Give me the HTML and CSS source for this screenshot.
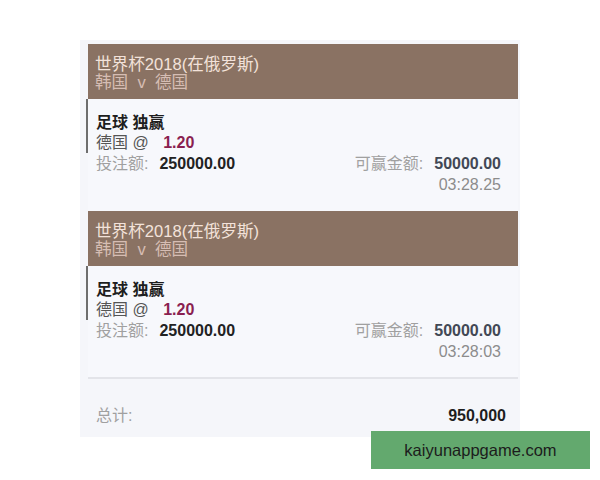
FILE: index.html
```html
<!DOCTYPE html>
<html lang="zh">
<head>
<meta charset="utf-8">
<link rel="stylesheet" href="styles.css">
</head>
<body>
<div class="panel">
  <div class="card">
    <div class="head">
      <div class="title">世界杯2018(在俄罗斯)</div>
      <div class="match">韩国 &nbsp;v &nbsp;德国</div>
    </div>
    <div class="body">
      <div class="sel">
        <div class="market">足球 独赢</div>
        <div class="pick">德国 @ <span class="odds">1.20</span></div>
      </div>
      <div class="row">
        <div><span class="label">投注额:</span><span class="val">250000.00</span></div>
        <div><span class="label">可赢金额:</span><span class="win">50000.00</span></div>
      </div>
      <div class="time">03:28.25</div>
    </div>
  </div>
  <div class="card last">
    <div class="head">
      <div class="title">世界杯2018(在俄罗斯)</div>
      <div class="match">韩国 &nbsp;v &nbsp;德国</div>
    </div>
    <div class="body">
      <div class="sel">
        <div class="market">足球 独赢</div>
        <div class="pick">德国 @ <span class="odds">1.20</span></div>
      </div>
      <div class="row">
        <div><span class="label">投注额:</span><span class="val">250000.00</span></div>
        <div><span class="label">可赢金额:</span><span class="win">50000.00</span></div>
      </div>
      <div class="time">03:28:03</div>
    </div>
  </div>
  <div class="total">
    <span class="label">总计:</span>
    <span class="sum">950,000</span>
  </div>
</div>
<div class="mark">kaiyunappgame.com</div>
</body>
</html>
```
FILE: styles.css
```css
html, body {
  margin: 0;
  padding: 0;
  background: #ffffff;
}
body {
  font-family: "Liberation Sans", "Noto Sans CJK SC", sans-serif;
  font-size: 16px;
  color: #222222;
  width: 600px;
  height: 480px;
  position: relative;
  overflow: hidden;
}
.panel {
  margin: 40px 0 0 80px;
  width: 430px;
  height: 393px;
  padding: 4px 2px 0 8px;
  background: #f5f6fa;
}
.head {
  height: 55px;
  box-sizing: border-box;
  padding: 12px 0 0 7px;
  background: #8a7263;
  font-size: 16.6px;
  line-height: 18px;
}
.title {
  color: #f3e2da;
}
.match {
  color: #d6bdb3;
}
.body {
  padding: 0 17px 16px 8px;
  background: #f7f8fc;
}
.last .body {
  padding-bottom: 15px;
  border-bottom: 2px solid #e3e4e9;
}
.sel {
  margin-left: -10px;
  padding: 14px 0 0 8px;
  border-left: 2px solid #6e6e6e;
  line-height: 20px;
}
.market {
  font-weight: bold;
  color: #1e1e1e;
}
.pick {
  color: #555555;
}
.odds {
  font-weight: bold;
  color: #8a1f50;
  margin-left: 10px;
}
.row {
  display: flex;
  justify-content: space-between;
  line-height: 21px;
}
.label {
  color: #a0a0a0;
  margin-right: 11px;
}
.val {
  font-weight: bold;
  color: #222222;
}
.win {
  font-weight: bold;
  color: #424855;
}
.time {
  text-align: right;
  color: #8c8c8c;
  line-height: 21px;
}
.total {
  display: flex;
  justify-content: space-between;
  margin-top: 27px;
  padding: 0 12px 0 8px;
  line-height: 20px;
}
.sum {
  font-weight: bold;
  color: #1e1e1e;
}
.mark {
  position: absolute;
  left: 371px;
  top: 431px;
  width: 219px;
  height: 38px;
  line-height: 38px;
  text-align: center;
  background: #63a96e;
  color: #1c1c1c;
  font-size: 16.5px;
}
```
